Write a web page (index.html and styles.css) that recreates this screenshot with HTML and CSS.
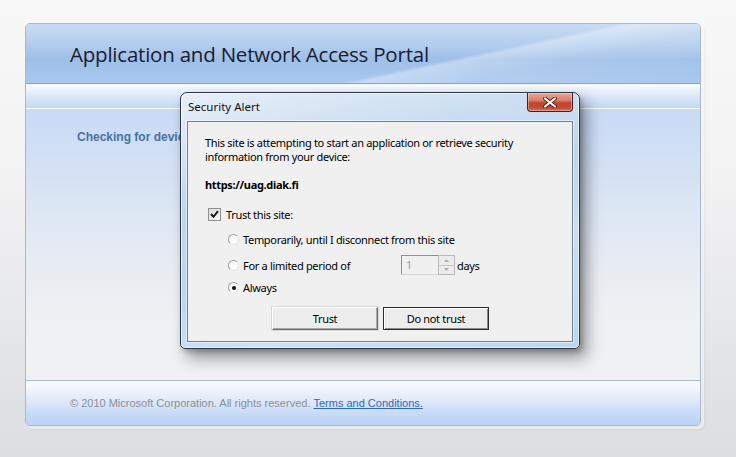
FILE: index.html
```html
<!DOCTYPE html>
<html lang="en">
<head>
<meta charset="utf-8">
<title>Application and Network Access Portal</title>
<link rel="stylesheet" href="styles.css">
</head>
<body>
<div class="page">
  <div class="card">
    <div class="header">
      <h1 class="title">Application and Network Access Portal</h1>
    </div>
    <div class="subbar"></div>
    <div class="content">
      <p class="checking">Checking for device compliance...</p>
    </div>
    <div class="footer">
      <span class="copy">© 2010 Microsoft Corporation. All rights reserved.</span>
      <a class="terms" href="#">Terms and Conditions.</a>
    </div>
  </div>

  <div class="dialog">
    <div class="titlebar">
      <span class="dlg-title">Security Alert</span>
      <div class="close">
        <svg width="16" height="11" viewBox="0 0 16 11">
          <path d="M3 1.5 L13 9.5 M13 1.5 L3 9.5" stroke="#5a2018" stroke-width="4" stroke-linecap="round"/>
          <path d="M3 1.5 L13 9.5 M13 1.5 L3 9.5" stroke="#ffffff" stroke-width="2.2" stroke-linecap="round"/>
        </svg>
      </div>
    </div>
    <div class="client">
      <p class="msg">This site is attempting to start an application or retrieve security<br>information from your device:</p>
      <p class="url">https://uag.diak.fi</p>
      <div class="check-row">
        <span class="checkbox">
          <svg width="9" height="9" viewBox="0 0 9 9"><path d="M1 4 L3.5 6.8 L8 1.2" fill="none" stroke="#1a1a1a" stroke-width="2"/></svg>
        </span>
        <span>Trust this site:</span>
      </div>
      <div class="radios">
        <div class="radio-row r1">
          <span class="radio"></span>
          <span>Temporarily, until I disconnect from this site</span>
        </div>
        <div class="radio-row r2">
          <span class="radio"></span>
          <span class="period">For a limited period of</span>
          <span class="spin">
            <span class="spin-input">1</span>
            <span class="spin-btns">
              <span class="spin-btn"><svg width="5" height="3" viewBox="0 0 5 3"><path d="M0 3 L2.5 0 L5 3Z" fill="#b0b0b0"/></svg></span>
              <span class="spin-btn"><svg width="5" height="3" viewBox="0 0 5 3"><path d="M0 0 L2.5 3 L5 0Z" fill="#b0b0b0"/></svg></span>
            </span>
          </span>
          <span class="days">days</span>
        </div>
        <div class="radio-row r3">
          <span class="radio on"></span>
          <span>Always</span>
        </div>
      </div>
      <div class="buttons">
        <button class="btn">Trust</button>
        <button class="btn default">Do not trust</button>
      </div>
    </div>
  </div>
</div>
</body>
</html>
```

FILE: styles.css
```css
html, body {
  margin: 0;
  padding: 0;
}
body {
  width: 736px;
  height: 457px;
  overflow: hidden;
  background: linear-gradient(180deg, #f8f8f8 0%, #f2f2f3 40%, #e3e4e7 80%, #dcdee2 100%);
  font-family: "Liberation Sans", Arial, sans-serif;
}
.page {
  position: relative;
  padding: 23px 35px 0 25px;
  height: 434px;
}
.card {
  width: 674px;
  height: 401px;
  border: 1px solid #a7b8ca;
  border-radius: 5px;
  display: flex;
  flex-direction: column;
  overflow: hidden;
  background: #f0f1f3;
  box-shadow: 3px 3px 0 rgba(255,255,255,.5), 4px 4px 3px rgba(0,0,0,.05);
}
.header {
  height: 59px;
  border-bottom: 1px solid #8da9c7;
  display: flex;
  align-items: center;
  background:
    linear-gradient(168deg, rgba(255,255,255,0) 0%, rgba(255,255,255,0) 62%, rgba(255,255,255,.35) 64%, rgba(255,255,255,.12) 75%, rgba(255,255,255,0) 100%),
    linear-gradient(180deg, #cadcf2 0%, #b3cdee 35%, #9ebfe8 60%, #a9c8ee 100%);
}
.title {
  margin: 0 0 0 44px;
  font-family: "Open Sans", "Noto Sans", sans-serif;
  font-weight: 400;
  font-size: 20.5px;
  letter-spacing: -0.22px;
  color: #17202e;
}
.subbar {
  height: 22px;
  margin-top: 1px;
  border-top: 1px solid #ffffff;
  border-bottom: 1px solid #ffffff;
  background: linear-gradient(180deg, #f6f9fe 0%, #dce8fa 45%, #c5d8f5 100%);
}
.content {
  flex: 1;
  background: linear-gradient(180deg, #c8daf6 0%, #d6e2f4 25%, #e7ecf3 55%, #eff1f4 80%, #f0f1f3 100%);
}
.checking {
  margin: 21px 0 0 51px;
  white-space: nowrap;
  font-weight: bold;
  font-size: 12px;
  color: #4672a0;
}
.footer {
  height: 44px;
  border-top: 1px solid #a6bcd4;
  display: flex;
  align-items: center;
  gap: 3px;
  padding-left: 44px;
  background: linear-gradient(180deg, #fbfcfe 0%, #e3ecfb 40%, #c7daf7 75%, #bcd2f5 100%);
  font-size: 11px;
  color: #8a8f96;
}
.terms {
  color: #2c6bb8;
  text-decoration: underline;
}

/* Dialog */
.dialog {
  position: absolute;
  left: 180px;
  top: 92px;
  width: 398px;
  height: 255px;
  border: 1px solid #2d3844;
  border-radius: 7px 7px 5px 5px;
  background:
    linear-gradient(160deg, rgba(255,255,255,.55) 0%, rgba(255,255,255,.1) 30%, rgba(255,255,255,0) 50%, rgba(255,255,255,.25) 70%, rgba(255,255,255,0) 100%),
    linear-gradient(180deg, #c9dcf1 0%, #b8d2ee 40%, #bcd7f2 100%);
  box-shadow: inset 0 0 0 1px rgba(255,255,255,.6), 7px 9px 16px rgba(0,0,0,.38), 2px 3px 5px rgba(0,0,0,.22);
  display: flex;
  flex-direction: column;
  font-family: "Noto Sans", "Open Sans", sans-serif;
  font-size: 11px;
  color: #000;
}
.titlebar {
  height: 28px;
  display: flex;
  align-items: flex-start;
  justify-content: space-between;
  padding: 0 6px 0 7px;
}
.dlg-title {
  margin-top: 6px;
  font-size: 11.5px;
  color: #111;
}
.close {
  width: 44px;
  height: 18px;
  border: 1px solid #4a1e18;
  border-top: none;
  border-radius: 0 0 4px 4px;
  background: linear-gradient(180deg, #e9a796 0%, #d9806c 40%, #c1452f 55%, #c04a35 80%, #d1715c 100%);
  box-shadow: inset 0 0 0 1px rgba(255,255,255,.35);
  display: flex;
  align-items: center;
  justify-content: center;
}
.client {
  margin: 0 6px 6px 6px;
  flex: 1;
  border: 1px solid #6f8194;
  background: #f0f0f0;
  padding: 0 0 0 17px;
  box-shadow: 0 0 0 1px rgba(255,255,255,.5);
  letter-spacing: -0.32px;
}
.msg {
  margin: 14px 0 0 0;
  line-height: 14px;
}
.url {
  margin: 14px 0 0 0;
  font-weight: bold;
  line-height: 14px;
}
.check-row {
  margin-top: 15px;
  height: 14px;
  display: flex;
  align-items: center;
  padding-left: 3px;
}
.checkbox {
  width: 11px;
  height: 11px;
  border: 1px solid #8e8f8f;
  background: linear-gradient(135deg, #dcdcdc 0%, #f8f8f8 100%);
  margin-right: 5px;
  display: flex;
  align-items: center;
  justify-content: center;
}
.radios {
  margin-top: 11px;
  padding-left: 23px;
}
.radio-row {
  display: flex;
  align-items: center;
}
.r1 { height: 14px; }
.r2 { height: 20px; margin-top: 9px; }
.r3 { height: 14px; margin-top: 5px; }
.radio {
  width: 11px;
  height: 11px;
  border-radius: 50%;
  border: 1px solid #9a9a9a;
  border-right-color: #e6e6e6;
  border-bottom-color: #e6e6e6;
  background: #fafafa;
  margin-right: 4px;
  box-sizing: border-box;
  position: relative;
}
.radio.on::after {
  content: "";
  position: absolute;
  left: 3px;
  top: 3px;
  width: 4px;
  height: 4px;
  border-radius: 50%;
  background: #111;
}
.period {
  width: 158px;
}
.spin {
  display: flex;
  height: 20px;
}
.spin-input {
  width: 32px;
  height: 18px;
  border: 1px solid #8f8f8f;
  border-right: none;
  border-bottom-color: #d8d8d8;
  background: #f0f0f0;
  color: #9c9c9c;
  padding-left: 4px;
  line-height: 18px;
}
.spin-btns {
  width: 17px;
  display: flex;
  flex-direction: column;
  border: 1px solid #b8b8b8;
  box-sizing: border-box;
}
.spin-btn {
  flex: 1;
  display: flex;
  align-items: center;
  justify-content: center;
  background: #ececec;
}
.spin-btn + .spin-btn {
  border-top: 1px solid #c8c8c8;
}
.days {
  margin-left: 2px;
}
.buttons {
  margin-top: 13px;
  margin-left: 67px;
  display: flex;
  gap: 5px;
}
.btn {
  font: inherit;
  letter-spacing: inherit;
  color: #000;
  height: 23px;
  width: 106px;
  padding: 0;
  background: #ededed;
  border: 1px solid;
  border-color: #ffffff #6d6d6d #6d6d6d #ffffff;
  box-shadow: inset -1px -1px 0 #a7a7a7;
  outline: 1px solid #d8d8d8;
}
.btn.default {
  border: 1px solid #2b2b2b;
  box-shadow: inset 1px 1px 0 #ffffff, inset -1px -1px 0 #8a8a8a;
  outline: none;
}
```
